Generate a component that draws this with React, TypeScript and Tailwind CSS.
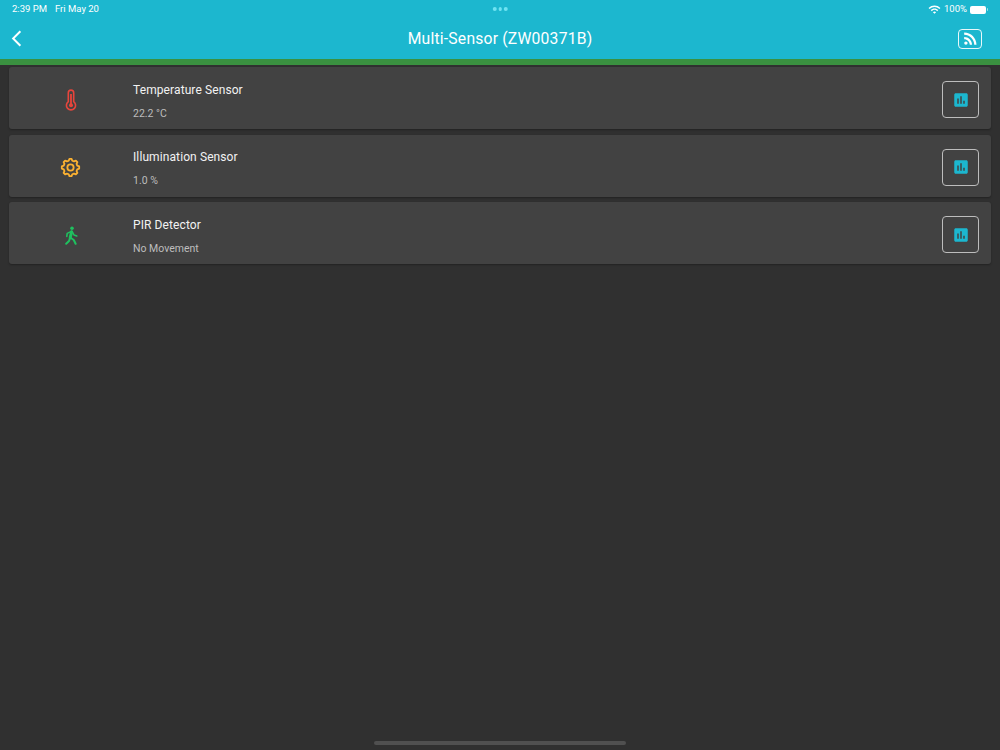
import React from "react";
import { MdAssessment, MdRssFeed, MdWifi, MdArrowBackIosNew } from "react-icons/md";

function Thermo() {
  return (
    <svg width="24" height="24" viewBox="0 0 24 24" fill="none" className="text-[#e8453c]">
      <path d="M9.3 13.6V4.8a2.7 2.7 0 0 1 5.4 0v8.8a4.6 4.6 0 1 1-5.4 0Z" stroke="currentColor" strokeWidth="1.6" />
      <path d="M12 6v10" stroke="currentColor" strokeWidth="1.8" />
      <circle cx="12" cy="17.3" r="2" fill="currentColor" />
    </svg>
  );
}

function Gear() {
  const pts: string[] = [];
  for (let i = 0; i < 8; i++) {
    const a = (i * Math.PI) / 4 - Math.PI / 2;
    const p = (r: number, d: number) => `${(12 + r * Math.cos(a + d)).toFixed(2)},${(12 + r * Math.sin(a + d)).toFixed(2)}`;
    pts.push(p(8, -0.26), p(10, -0.12), p(10, 0.12), p(8, 0.26));
  }
  return (
    <svg width="21" height="21" viewBox="0 0 24 24" fill="none" className="text-[#fbb131]">
      <polygon points={pts.join(" ")} stroke="currentColor" strokeWidth="2.1" strokeLinejoin="round" />
      <circle cx="12" cy="12" r="3.6" stroke="currentColor" strokeWidth="2.1" />
    </svg>
  );
}

function Walker() {
  return (
    <svg width="20" height="20" viewBox="0 0 20 20" fill="none" stroke="currentColor" strokeLinecap="round" strokeLinejoin="round" className="text-[#1fc15f]">
      <circle cx="11" cy="3.2" r="1.8" fill="currentColor" stroke="none" />
      <path d="M10.6 6.8 9.2 12.6" strokeWidth="3" />
      <path d="M10.4 6.4 6.2 8.4 5.8 11.4" strokeWidth="1.6" />
      <path d="M11.2 6.6 13 10 15.8 11" strokeWidth="1.6" />
      <path d="M9.2 12.6 8 16 5.2 18.8" strokeWidth="2" />
      <path d="M9.6 12.8 12.8 15 14.6 18.8" strokeWidth="2" />
    </svg>
  );
}

function Row({ icon, title, value }: { icon: React.ReactNode; title: string; value: string }) {
  return (
    <div className="flex h-[62px] items-center rounded-[3px] bg-[#424242] pt-[3px] shadow-[0_1px_2px_rgba(0,0,0,0.3)]">
      <div className="flex w-[123px] shrink-0 items-center justify-center">{icon}</div>
      <div className="flex flex-1 flex-col gap-[8px] pl-[1px] pt-[4px]">
        <div className="text-[12px] leading-[16px] tracking-[0.1px] text-[#f2f2f2]">{title}</div>
        <div className="text-[10.5px] leading-[16px] text-[#bdbdbd]">{value}</div>
      </div>
      <div className="mr-[12px] flex h-[37px] w-[37px] items-center justify-center rounded-[4px] border border-[#bdbdbd]">
        <MdAssessment size={18} className="text-[#1cb7cf]" />
      </div>
    </div>
  );
}

export default function App() {
  return (
    <div className="relative flex h-[750px] w-[1000px] flex-col overflow-hidden bg-[#303030] font-['Roboto','Liberation_Sans',sans-serif]">
      <header className="border-b-[6px] border-[#3a9140] bg-[#1cb7cf] text-white">
        <div className="relative flex h-[18px] items-center justify-between px-[12px] pt-[1px] text-[9.5px]">
          <div className="flex gap-[8px]">
            <span>2:39 PM</span>
            <span>Fri May 20</span>
          </div>
          <div className="absolute left-1/2 top-[7px] flex -translate-x-1/2 gap-[2px]">
            <span className="h-[3.5px] w-[3.5px] rounded-full bg-[#6fe3f2]" />
            <span className="h-[3.5px] w-[3.5px] rounded-full bg-[#6fe3f2]" />
            <span className="h-[3.5px] w-[3.5px] rounded-full bg-[#6fe3f2]" />
          </div>
          <div className="flex items-center gap-[3px]">
            <MdWifi size={13} />
            <span>100%</span>
            <div className="flex items-center">
              <div className="h-[8px] w-[16px] rounded-[2px] bg-white" />
              <div className="ml-[1px] h-[3px] w-[1px] rounded-r-sm bg-white/60" />
            </div>
          </div>
        </div>
        <div className="grid h-[41px] grid-cols-[1fr_auto_1fr] items-center px-[18px]">
          <MdArrowBackIosNew size={19} className="-ml-[11px]" />
          <h1 className="text-[15.7px] font-normal tracking-[0.2px]">Multi-Sensor (ZW00371B)</h1>
          <div className="flex h-[20px] w-[24px] items-center justify-center justify-self-end rounded-[4px] border border-white/90">
            <MdRssFeed size={19} />
          </div>
        </div>
      </header>
      <main className="flex flex-col gap-[5.5px] px-[9px] pt-[2px]">
        <Row icon={<Thermo />} title="Temperature Sensor" value="22.2 °C" />
        <Row icon={<Gear />} title="Illumination Sensor" value="1.0 %" />
        <Row icon={<Walker />} title="PIR Detector" value="No Movement" />
      </main>
      <div className="absolute bottom-[5px] left-[374px] h-[4px] w-[252px] rounded-full bg-[#505050]" />
    </div>
  );
}
